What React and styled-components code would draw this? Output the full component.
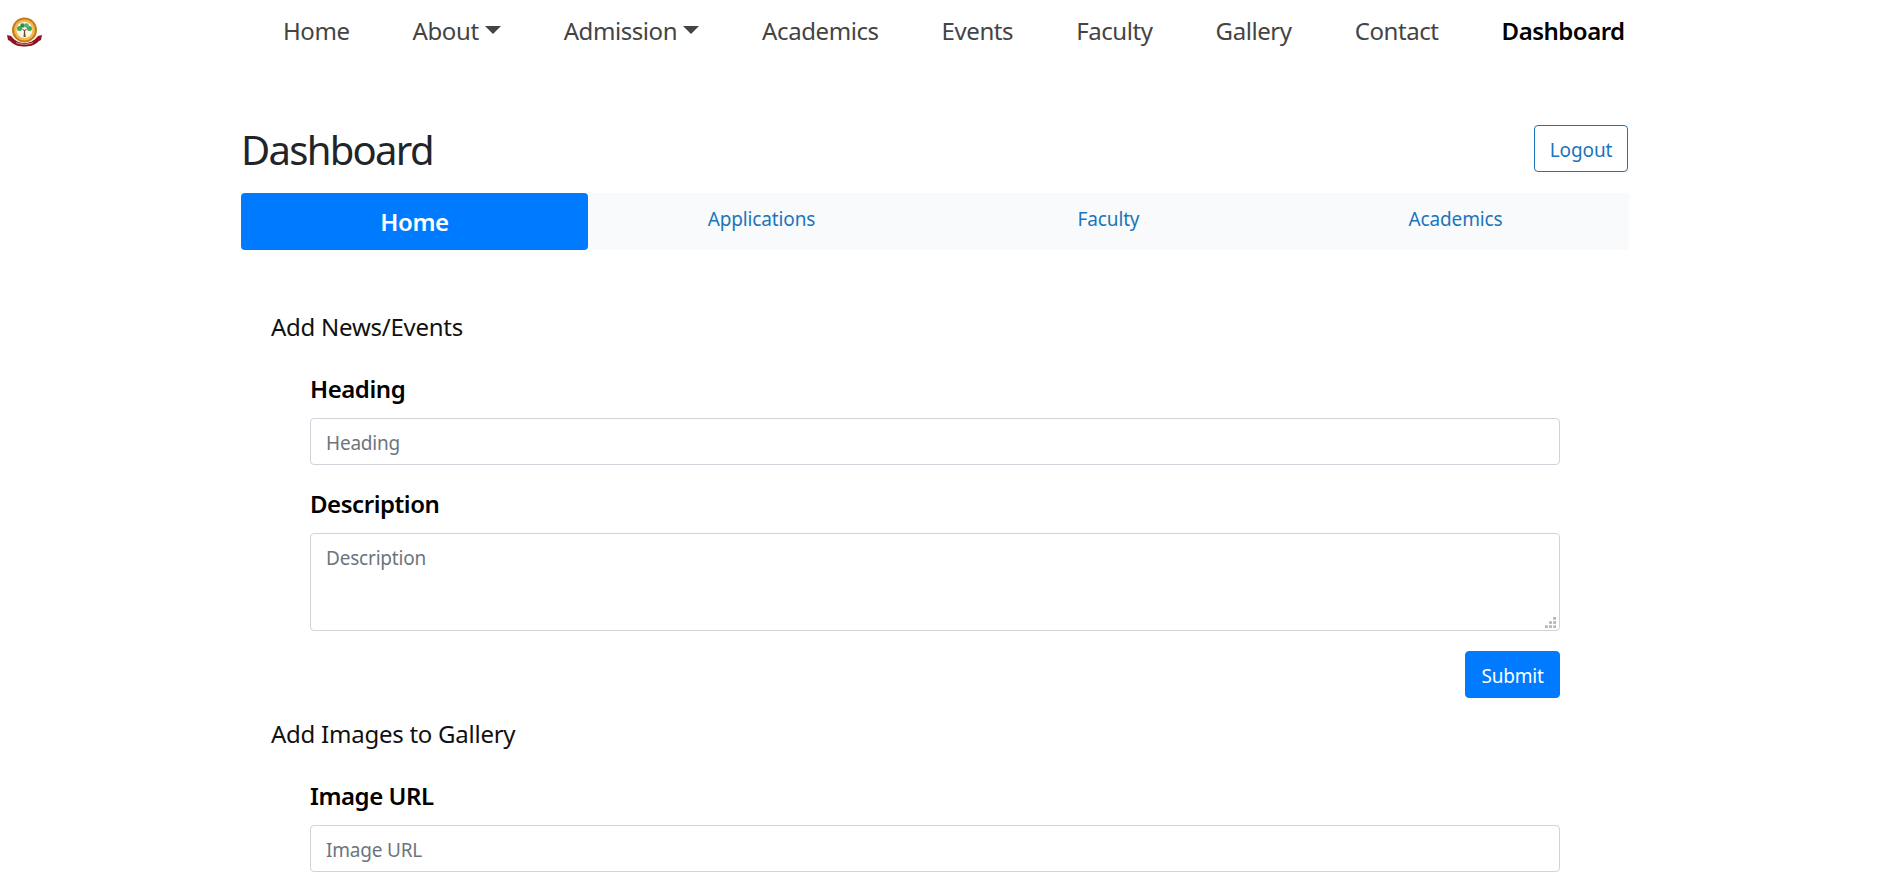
import React from 'react';
import styled, { createGlobalStyle } from 'styled-components';

const navItems = [
  { label: 'Home' },
  { label: 'About', caret: true },
  { label: 'Admission', caret: true },
  { label: 'Academics' },
  { label: 'Events' },
  { label: 'Faculty' },
  { label: 'Gallery' },
  { label: 'Contact' },
  { label: 'Dashboard', active: true },
];

const tabs = ['Home', 'Applications', 'Faculty', 'Academics'];

const gripDots = [[9, 0], [4.500, 4.500], [9, 4.500], [0, 9], [4.500, 9], [9, 9]];

const Logo = () => (
  <LogoSvg viewBox="0 0 38 36" aria-hidden="true">
    <circle cx="18.500" cy="14" r="12.500" fill="#c9791a" />
    <circle cx="18.500" cy="14" r="10.500" fill="#eeb94f" />
    <circle cx="18.500" cy="14" r="8" fill="#fbf8ea" />
    <path d="M17.500 21 L18 15 L15 12 L18.500 14 L22 12 L19 15 L19.700 21 Z" fill="#6b4a2b" />
    <circle cx="13.500" cy="12.500" r="2.500" fill="#3fa65a" />
    <circle cx="16.500" cy="9.500" r="2.300" fill="#2f8f4e" />
    <circle cx="20.500" cy="9.500" r="2.300" fill="#58b06a" />
    <circle cx="23.500" cy="12.500" r="2.500" fill="#3fa65a" />
    <path d="M1 19 L5 20 C10 26 14 27 18.500 27 C23 27 27 26 32 20 L36 19 L35 24 L33 25 C28 30 23 30.500 18.500 30.500 C14 30.500 9 30 4 25 L2 24 Z" fill="#8a1420" />
    <path d="M10 26.500 C14 28.800 23 28.800 27 26.500" fill="none" stroke="#e8c9b0" strokeWidth="0.800" />
  </LogoSvg>
);

const Field = ({ label, placeholder, multiline }) => (
  <FieldGroup>
    <FieldLabel>{label}</FieldLabel>
    {multiline ? (
      <TextAreaWrap>
        <TextArea placeholder={placeholder} />
        <Grip viewBox="0 0 12 12" aria-hidden="true">
          {gripDots.map(([x, y]) => (
            <rect key={`${x}-${y}`} x={x} y={y} width="3" height="3" fill="#b4b4b4" />
          ))}
        </Grip>
      </TextAreaWrap>
    ) : (
      <TextInput placeholder={placeholder} />
    )}
  </FieldGroup>
);

const App = () => (
  <Page>
    <GlobalStyle />
    <NavBar>
      <Logo />
      <NavList>
        {navItems.map((item) => (
          <NavLink key={item.label} $active={item.active}>
            {item.label}
            {item.caret && <Caret />}
          </NavLink>
        ))}
      </NavList>
    </NavBar>
    <Container>
      <TitleRow>
        <Title>Dashboard</Title>
        <LogoutButton>Logout</LogoutButton>
      </TitleRow>
      <TabBar>
        {tabs.map((tab, index) => (
          <Tab key={tab} $active={index === 0}>{tab}</Tab>
        ))}
      </TabBar>
      <Section>
        <SectionTitle>Add News/Events</SectionTitle>
        <Form>
          <Field label="Heading" placeholder="Heading" />
          <Field label="Description" placeholder="Description" multiline />
          <SubmitRow>
            <SubmitButton>Submit</SubmitButton>
          </SubmitRow>
        </Form>
        <SectionTitle>Add Images to Gallery</SectionTitle>
        <Form>
          <Field label="Image URL" placeholder="Image URL" />
        </Form>
      </Section>
    </Container>
  </Page>
);

const GlobalStyle = createGlobalStyle`
  html, body {
    margin: 0;
    background: #fff;
    overflow: hidden;
  }
  * {
    box-sizing: border-box;
  }
`;

const Page = styled.div`
  color: #212529;
  font-family: "Noto Sans", "Open Sans", sans-serif;
  height: 891px;
`;

const NavBar = styled.nav`
  align-items: flex-start;
  display: flex;
  height: 125px;
  padding: 15px 0 0 6px;
`;

const LogoSvg = styled.svg`
  display: block;
  height: 36px;
  margin-top: 1px;
  width: 38px;
`;

const NavList = styled.div`
  align-items: center;
  display: flex;
  gap: 63px;
  height: 30px;
  margin-left: 239px;
`;

const NavLink = styled.a`
  align-items: center;
  color: ${(props) => (props.$active ? '#000' : '#444')};
  display: flex;
  font-size: 24px;
  font-weight: ${(props) => (props.$active ? 600 : 400)};
  letter-spacing: ${(props) => (props.$active ? '-0.5px' : '-0.42px')};
  white-space: nowrap;
`;

const Caret = styled.span`
  border-left: 8px solid transparent;
  border-right: 8px solid transparent;
  border-top: 8px solid #444;
  display: block;
  margin-left: 6px;
`;

const Container = styled.main`
  margin-left: 241px;
  width: 1388px;
`;

const TitleRow = styled.div`
  align-items: flex-start;
  display: flex;
  height: 68px;
  justify-content: space-between;
`;

const Title = styled.h1`
  font-size: 40px;
  font-weight: 400;
  letter-spacing: -1.7px;
  line-height: 54px;
  margin: -2px 0 0;
`;

const LogoutButton = styled.button`
  background: #fff;
  border: 1px solid #1b75bb;
  border-radius: 4px;
  color: #1b75bb;
  font-family: inherit;
  font-size: 19px;
  height: 47px;
  letter-spacing: -0.1px;
  margin-right: 1px;
  padding: 2px 0 0;
  width: 94px;
`;

const TabBar = styled.div`
  background: #f9fafb;
  display: grid;
  grid-template-columns: repeat(4, 1fr);
  height: 57px;
`;

const Tab = styled.a`
  align-items: center;
  background: ${(props) => (props.$active ? '#007bff' : 'transparent')};
  border-radius: 4px;
  color: ${(props) => (props.$active ? '#fff' : '#1b75bb')};
  display: flex;
  font-size: ${(props) => (props.$active ? '24px' : '19px')};
  font-weight: ${(props) => (props.$active ? 600 : 400)};
  justify-content: center;
  letter-spacing: ${(props) => (props.$active ? '-0.4px' : '-0.15px')};
  padding-bottom: ${(props) => (props.$active ? '0' : '6px')};
`;

const Section = styled.section`
  padding: 0 69px 0 30px;
`;

const SectionTitle = styled.h2`
  color: #111;
  font-size: 24px;
  font-weight: 400;
  letter-spacing: -0.25px;
  line-height: 32px;
  margin: 0;
  padding-top: 20px;
  &:first-child {
    padding-top: 61px;
  }
`;

const Form = styled.div`
  padding: 30px 0 0 39px;
`;

const FieldGroup = styled.div`
  margin-bottom: 23px;
`;

const FieldLabel = styled.label`
  color: #000;
  display: block;
  font-size: 24px;
  font-weight: 600;
  letter-spacing: -0.45px;
  line-height: 32px;
  margin-bottom: 13px;
`;

const TextInput = styled.input`
  background: #fff;
  border: 1px solid #ced4da;
  border-radius: 4px;
  display: block;
  font-family: inherit;
  font-size: 19px;
  height: 47px;
  letter-spacing: -0.2px;
  padding: 2px 15px 0;
  width: 100%;
  &::placeholder {
    color: #6c757d;
    opacity: 1;
  }
`;

const TextAreaWrap = styled.div`
  position: relative;
`;

const TextArea = styled.textarea`
  background: #fff;
  border: 1px solid #ced4da;
  border-radius: 4px;
  display: block;
  font-family: inherit;
  font-size: 19px;
  height: 98px;
  letter-spacing: -0.2px;
  padding: 11px 15px 9px;
  resize: none;
  width: 100%;
  &::placeholder {
    color: #6c757d;
    opacity: 1;
  }
`;

const Grip = styled.svg`
  bottom: 3px;
  height: 11px;
  position: absolute;
  right: 4px;
  width: 11px;
`;

const SubmitRow = styled.div`
  display: flex;
  justify-content: flex-end;
  margin-top: -3px;
`;

const SubmitButton = styled.button`
  background: #007bff;
  border: 1px solid #007bff;
  border-radius: 4px;
  color: #fff;
  font-family: inherit;
  font-size: 19px;
  height: 47px;
  letter-spacing: -0.2px;
  padding: 2px 0 0;
  width: 95px;
`;

export default App;
